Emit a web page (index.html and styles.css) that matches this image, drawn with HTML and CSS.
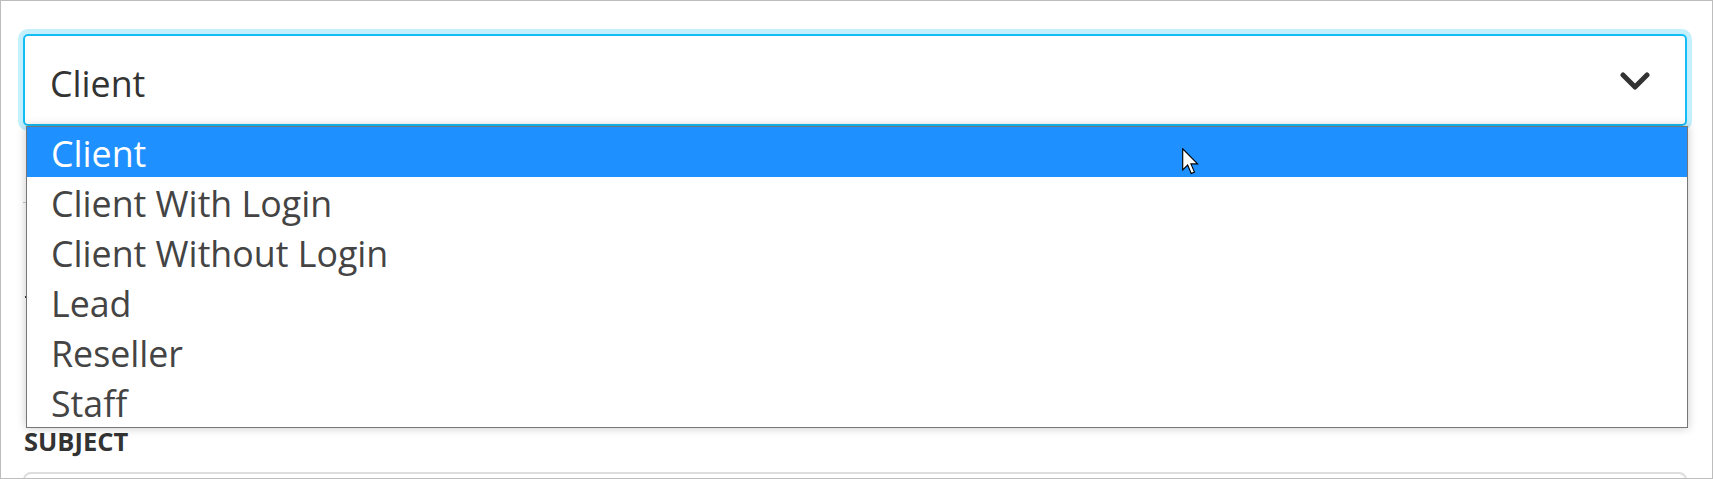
FILE: index.html
```html
<!DOCTYPE html>
<html lang="en">
<head>
    <meta charset="UTF-8">
    <title>Send Email - Recipient Type</title>
    <link rel="stylesheet" href="styles.css">
</head>
<body>
    <div class="page">
        <div class="field">
            <div class="select-box">
                <span class="select-value">Client</span>
                <svg class="chevron" width="30" height="18" viewBox="0 0 30 18">
                    <path d="M3 3 L15 15 L27 3" fill="none" stroke="#333" stroke-width="5" stroke-linecap="round" stroke-linejoin="round"/>
                </svg>
            </div>
            <ul class="dropdown">
                <li class="option selected">Client</li>
                <li class="option">Client With Login</li>
                <li class="option">Client Without Login</li>
                <li class="option">Lead</li>
                <li class="option">Reseller</li>
                <li class="option">Staff</li>
            </ul>
            <svg class="cursor" width="17" height="27" viewBox="0 0 12 19">
                <path d="M0.5 0.5 L0.5 15.5 L4 12 L6.5 18 L8.8 17 L6.3 11.2 L11 11.2 Z" fill="#fff" stroke="#000" stroke-width="0.8" stroke-linejoin="miter"/>
            </svg>
        </div>

        <!-- fields hidden under the open list -->
        <div class="divider"></div>
        <div class="label-stub"></div>

        <label class="label">Subject</label>
        <div class="input"></div>
    </div>
</body>
</html>
```

FILE: styles.css
```css
body {
    margin: 0;
    padding: 0;
    background: #fff;
    font-family: 'Open Sans', 'Noto Sans', Arial, sans-serif;
    color: #333;
}
.page {
    width: 1713px;
    height: 479px;
    box-sizing: border-box;
    border: 1px solid #bdbdbd;
    padding: 33px 25px 0 22px;
    overflow: hidden;
}
.field {
    position: relative;
}
.select-box {
    height: 92px;
    box-sizing: border-box;
    border: 2px solid #14bdf6;
    border-radius: 5px;
    box-shadow: 0 0 0 5px #c4effd;
    display: flex;
    align-items: center;
    justify-content: space-between;
    padding: 6px 35px 0 25px;
}
.select-value {
    font-size: 35.75px;
    color: #333;
}
.chevron {
    display: block;
    margin-top: -5px;
}
.dropdown {
    position: absolute;
    top: 92px;
    left: 3px;
    width: 1662px;
    margin: 0;
    padding: 0;
    list-style: none;
    background: #fff;
    border: 1px solid #767676;
    box-sizing: border-box;
    box-shadow: 0 0 9px rgba(0, 0, 0, 0.22);
    z-index: 2;
}
.option {
    height: 50px;
    box-sizing: border-box;
    padding: 3px 0 0 24px;
    line-height: 47px;
    font-size: 35.75px;
    color: #444;
}
.option.selected {
    background: #1e90ff;
    color: #fff;
}
.cursor {
    position: absolute;
    top: 114px;
    left: 1159px;
    z-index: 3;
}
.divider {
    margin-top: 76px;
    border-top: 1px solid #c8c8c8;
    height: 0;
}
.label-stub {
    margin: 93px 0 0 2px;
    width: 6px;
    height: 2px;
    background: #333;
}
.label {
    display: block;
    margin-top: 130px;
    margin-left: 1px;
    font-size: 25.5px;
    font-weight: bold;
    line-height: 26px;
    text-transform: uppercase;
    color: #333;
}
.input {
    margin-top: 18px;
    height: 44px;
    border: 2px solid #ddd;
    border-radius: 8px;
}
```
